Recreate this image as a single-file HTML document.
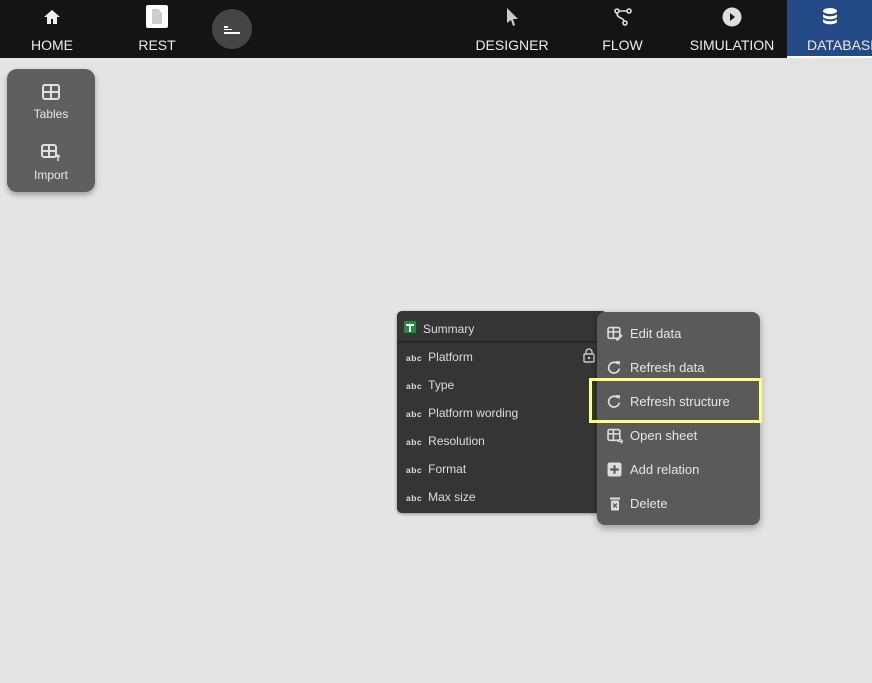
<!DOCTYPE html>
<html><head><style>
*{box-sizing:border-box;margin:0;padding:0}
body{width:872px;height:683px;background:#e4e4e4;font-family:"Liberation Sans",sans-serif;position:relative;overflow:hidden}
.top{position:absolute;left:0;top:0;width:872px;height:58px;background:#141414}
.nav{position:absolute;top:0;height:58px;color:#ececec;font-size:14px;text-align:center}
.nav .lbl{position:absolute;top:37px;left:0;right:0}
.nav svg{position:absolute;top:7px;left:50%;margin-left:-10px}
.side{position:absolute;left:7px;top:69px;width:88px;height:123px;background:#5f5f5f;border-radius:10px;box-shadow:0 3px 6px rgba(0,0,0,.3);color:#e8e8e8;font-size:12px;text-align:center}
.card{position:absolute;left:397px;top:311px;width:210px;height:202px;background:#353535;border-radius:5px;color:#ddd;font-size:12px;box-shadow:0 1px 3px rgba(0,0,0,.4)}
.row{position:absolute;left:9px;height:16px;line-height:16px}
.row b{font-size:8.5px;font-weight:bold;margin-right:6px;letter-spacing:.5px}
.menu{position:absolute;left:597px;top:312px;width:163px;height:213px;background:#5a5a5a;border-radius:8px;box-shadow:0 3px 8px rgba(0,0,0,.35);color:#e6e6e6;font-size:13px}
.mi{position:absolute;left:33px;height:18px;line-height:18px}
.ic{position:absolute;left:-23px;top:1px}
</style></head><body>
<div class="top"></div>
<div class="nav" style="left:20px;width:64px"><svg width="20" height="20" viewBox="0 0 20 20"><path d="M10 3 L18 10 H15 V17 H11 V12 H9 V17 H5 V10 H2Z" fill="#eee"/></svg><div class="lbl">HOME</div></div>
<div class="nav" style="left:125px;width:64px"><svg width="24" height="24" viewBox="0 0 24 24" style="top:5px;margin-left:-12px"><rect x="1" y="0" width="22" height="23" rx="2" fill="#fff"/><path d="M7 4h6l4 4v11H7z" fill="#ccc"/></svg><div class="lbl">REST</div></div>
<div style="position:absolute;left:212px;top:9px;width:40px;height:40px;border-radius:20px;background:#454545"><div style="position:absolute;left:12px;top:17px;width:4px;height:2px;background:#fff"></div><div style="position:absolute;left:12px;top:23px;width:16px;height:2px;background:#fff"></div><div style="position:absolute;left:12px;top:20px;width:8px;height:1px;background:#fff"></div></div>
<div class="nav" style="left:472px;width:80px"><svg width="20" height="20" viewBox="0 0 20 20"><path d="M5 1 L16 12 H11 L13 18 L11 19 L9 13 L5 16Z" fill="#ccc"/></svg><div class="lbl">DESIGNER</div></div>
<div class="nav" style="left:595px;width:55px"><svg width="20" height="20" viewBox="0 0 20 20"><g fill="none" stroke="#ddd" stroke-width="1.6"><circle cx="4" cy="4" r="2"/><circle cx="16" cy="4" r="2"/><circle cx="12" cy="16" r="2"/><path d="M6 4h8M4 6c0 6 6 4 7 8"/></g></svg><div class="lbl">FLOW</div></div>
<div class="nav" style="left:687px;width:90px"><svg width="20" height="20" viewBox="0 0 20 20"><circle cx="10" cy="10" r="9.5" fill="#ddd"/><path d="M8 6l5 4-5 4z" fill="#141414"/></svg><div class="lbl">SIMULATION</div></div>
<div class="nav" style="left:787px;width:85px;background:#234a87;border-bottom:2px solid #fff"><svg width="20" height="20" viewBox="0 0 20 20"><g fill="#fff"><ellipse cx="10" cy="4" rx="7" ry="3"/><path d="M3 7c2 3 12 3 14 0v3c-2 3-12 3-14 0z"/><path d="M3 12c2 3 12 3 14 0v3c-2 3-12 3-14 0z"/></g></svg><div class="lbl" style="text-align:left;left:20px;white-space:nowrap">DATABASE</div></div>

<div class="side">
<svg width="18" height="16" viewBox="0 0 18 16" style="position:absolute;left:35px;top:15px"><rect x="1" y="1" width="16" height="14" rx="2" fill="none" stroke="#e0e0e0" stroke-width="2"/><path d="M1 8h16M9 1v14" stroke="#e0e0e0" stroke-width="2"/></svg>
<div style="position:absolute;top:38px;left:0;right:0">Tables</div>
<svg width="20" height="18" viewBox="0 0 20 18" style="position:absolute;left:34px;top:75px"><rect x="1" y="1" width="14" height="12" rx="2" fill="none" stroke="#e0e0e0" stroke-width="2"/><path d="M1 7h14M8 1v12" stroke="#e0e0e0" stroke-width="2"/><path d="M17 17V11M15 13l2-2 2 2" stroke="#e0e0e0" stroke-width="1.5" fill="none"/></svg>
<div style="position:absolute;top:99px;left:0;right:0">Import</div>
</div>

<div class="card">
<div style="position:absolute;left:0;right:0;top:30px;height:2px;background:#272727"></div>
<div style="position:absolute;left:7px;top:10px;width:12px;height:12px;background:#1e8e3e;border-radius:1px"><div style="position:absolute;left:2px;top:3px;width:8px;height:1.5px;background:#fff"></div><div style="position:absolute;left:5px;top:3px;width:1.5px;height:8px;background:#fff"></div></div>
<div class="row" style="left:26px;top:10px;font-size:12px">Summary</div>
<div class="row" style="top:38px"><b>abc</b>Platform</div>
<svg width="12" height="15" viewBox="0 0 12 15" style="position:absolute;left:186px;top:37px"><path d="M3 6V4a3 3 0 0 1 6 0v2" fill="none" stroke="#ccc" stroke-width="1.4"/><rect x="1" y="6" width="10" height="8" rx="1" fill="none" stroke="#ccc" stroke-width="1.4"/><circle cx="6" cy="10" r="1.2" fill="#ccc"/></svg>
<div class="row" style="top:66px"><b>abc</b>Type</div>
<div class="row" style="top:94px"><b>abc</b>Platform wording</div>
<div class="row" style="top:122px"><b>abc</b>Resolution</div>
<div class="row" style="top:150px"><b>abc</b>Format</div>
<div class="row" style="top:178px"><b>abc</b>Max size</div>
</div>

<div class="menu">
<div class="mi" style="top:13px"><svg class="ic" width="16" height="16" viewBox="0 0 15 14"><rect x="1" y="1" width="11" height="10" rx="1.5" fill="none" stroke="#ddd" stroke-width="1.5"/><path d="M1 5h11M6 1v10" stroke="#ddd" stroke-width="1.5"/><path d="M9 13l5-5" stroke="#ddd" stroke-width="2"/></svg>Edit data</div>
<div class="mi" style="top:47px"><svg class="ic" width="15" height="15" viewBox="0 0 14 14"><path d="M11.5 8A5 5 0 1 1 10 3.5" fill="none" stroke="#ddd" stroke-width="1.6"/><path d="M8 1h4v4z" fill="#ddd"/></svg>Refresh data</div>
<div class="mi" style="top:81px"><svg class="ic" width="15" height="15" viewBox="0 0 14 14"><path d="M11.5 8A5 5 0 1 1 10 3.5" fill="none" stroke="#ddd" stroke-width="1.6"/><path d="M8 1h4v4z" fill="#ddd"/></svg>Refresh structure</div>
<div class="mi" style="top:115px"><svg class="ic" width="16" height="16" viewBox="0 0 15 14"><rect x="1" y="1" width="11" height="10" rx="1.5" fill="none" stroke="#ddd" stroke-width="1.5"/><path d="M1 5h11M6 1v10" stroke="#ddd" stroke-width="1.5"/><path d="M10 12h4M13 10l1.5 2-1.5 2" stroke="#ddd" stroke-width="1.2" fill="none"/></svg>Open sheet</div>
<div class="mi" style="top:149px"><svg class="ic" width="15" height="15" viewBox="0 0 14 14"><rect x="0.5" y="0.5" width="13" height="13" rx="2" fill="#ddd"/><path d="M7 3v8M3 7h8" stroke="#5a5a5a" stroke-width="2"/></svg>Add relation</div>
<div class="mi" style="top:183px"><svg class="ic" width="14" height="15" viewBox="0 0 14 14" style="left:-21px"><rect x="1" y="1" width="10" height="2" fill="#ddd"/><rect x="2" y="4" width="8" height="10" rx="1" fill="#ddd"/><path d="M4 7l4 4M8 7l-4 4" stroke="#5a5a5a" stroke-width="1.3"/></svg>Delete</div>
</div>
<div style="position:absolute;left:589px;top:378px;width:173px;height:45px;border:3px solid #ffff80"></div>
</body></html>
